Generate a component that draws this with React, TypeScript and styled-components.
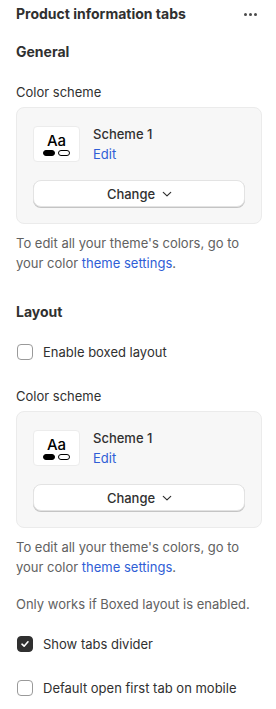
import styled, { createGlobalStyle } from "styled-components";

const GlobalStyle = createGlobalStyle`
  body {
    margin: 0;
    background: #ffffff;
    font-family: Inter, "Noto Sans", sans-serif;
    color: #303030;
    -webkit-font-smoothing: antialiased;
  }
`;

const Panel = styled.div`
  width: 276px;
  box-sizing: border-box;
  padding: 4px 14px 0 16px;
  display: flex;
  flex-direction: column;
`;

const Header = styled.div`
  display: flex;
  align-items: center;
  justify-content: space-between;
  height: 20px;
`;

const Title = styled.h1`
  margin: 0;
  font-size: 14px;
  font-weight: 650;
  line-height: 20px;
  color: #303030;
`;

const MenuButton = styled.div`
  display: flex;
  gap: 2px;
  padding-right: 5px;
  span {
    width: 3px;
    height: 3px;
    border-radius: 50%;
    background: #4a4a4a;
  }
`;

const SectionTitle = styled.h2<{ $top: number }>`
  margin: ${(p) => p.$top}px 0 0;
  font-size: 14px;
  font-weight: 650;
  line-height: 20px;
`;

const Label = styled.div<{ $top: number }>`
  margin-top: ${(p) => p.$top}px;
  font-size: 13px;
  line-height: 20px;
`;

const Card = styled.div`
  margin-top: 5px;
  background: #f7f7f7;
  border: 1px solid #ebebeb;
  border-radius: 8px;
  padding: 18px 16px 16px 16px;
  display: flex;
  flex-direction: column;
  gap: 18px;
`;

const SchemeRow = styled.div`
  display: flex;
  align-items: flex-start;
  gap: 13px;
  height: 36px;
`;

const Swatch = styled.div`
  width: 47px;
  height: 36px;
  box-sizing: border-box;
  background: #ffffff;
  border: 1px solid #ececec;
  border-radius: 4px;
  display: flex;
  flex-direction: column;
  align-items: center;
  justify-content: center;
  gap: 1px;
`;

const SwatchText = styled.div`
  font-size: 15px;
  font-weight: 450;
  line-height: 16px;
  color: #000;
`;

const Pills = styled.div`
  display: flex;
  gap: 3px;
`;

const Pill = styled.div<{ $filled?: boolean }>`
  width: 12px;
  height: 6px;
  box-sizing: border-box;
  border-radius: 3px;
  border: 1px solid #000;
  background: ${(p) => (p.$filled ? "#000" : "#fff")};
`;

const SchemeInfo = styled.div`
  display: flex;
  flex-direction: column;
  margin-top: -2px;
  font-size: 13px;
  line-height: 20px;
`;

const SchemeName = styled.div`
  font-weight: 550;
`;

const Link = styled.span`
  color: #2f5ed6;
`;

const ChangeButton = styled.button`
  height: 27px;
  width: 100%;
  background: #ffffff;
  border: 1px solid #e3e3e3;
  border-radius: 8px;
  box-shadow: 0 1px 0 #c4c4c4;
  display: flex;
  align-items: center;
  justify-content: center;
  gap: 6px;
  font-family: inherit;
  font-size: 13px;
  font-weight: 450;
  color: #303030;
  padding: 0 0 0 2px;
`;

const Help = styled.p<{ $top: number }>`
  margin: ${(p) => p.$top}px 0 0;
  font-size: 13px;
  line-height: 20px;
  color: #616161;
`;

const CheckRow = styled.label<{ $top: number }>`
  margin-top: ${(p) => p.$top}px;
  display: flex;
  align-items: center;
  gap: 10px;
  font-size: 13px;
  line-height: 20px;
  color: #303030;
`;

const Box = styled.span<{ $checked?: boolean }>`
  width: 16px;
  height: 16px;
  box-sizing: border-box;
  margin-left: 1px;
  border-radius: 4px;
  border: 1px solid ${(p) => (p.$checked ? "#303030" : "#9a9a9a")};
  background: ${(p) => (p.$checked ? "#303030" : "#fff")};
  display: flex;
  align-items: center;
  justify-content: center;
`;

const Chevron = () => (
  <svg width="12" height="12" viewBox="0 0 12 12" fill="none">
    <path d="M2.3 4.4 6 7.9 9.7 4.4" stroke="#303030" strokeWidth="1.2" strokeLinecap="round" strokeLinejoin="round" />
  </svg>
);

const Check = () => (
  <svg width="10" height="10" viewBox="0 0 10 10" fill="none">
    <path d="M2 5.2 4.1 7.2 8 2.8" stroke="#fff" strokeWidth="1.6" strokeLinecap="round" strokeLinejoin="round" />
  </svg>
);

const SchemeCard = () => (
  <Card>
    <SchemeRow>
      <Swatch>
        <SwatchText>Aa</SwatchText>
        <Pills>
          <Pill $filled />
          <Pill />
        </Pills>
      </Swatch>
      <SchemeInfo>
        <SchemeName>Scheme 1</SchemeName>
        <Link>Edit</Link>
      </SchemeInfo>
    </SchemeRow>
    <ChangeButton>
      Change <Chevron />
    </ChangeButton>
  </Card>
);

const ThemeHelp = () => (
  <Help $top={9}>
    To edit all your theme's colors, go to your color <Link>theme settings</Link>.
  </Help>
);

export default function App() {
  return (
    <>
      <GlobalStyle />
      <Panel>
        <Header>
          <Title>Product information tabs</Title>
          <MenuButton>
            <span />
            <span />
            <span />
          </MenuButton>
        </Header>
        <SectionTitle $top={18}>General</SectionTitle>
        <Label $top={20}>Color scheme</Label>
        <SchemeCard />
        <ThemeHelp />
        <SectionTitle $top={29}>Layout</SectionTitle>
        <CheckRow $top={20}>
          <Box />
          Enable boxed layout
        </CheckRow>
        <Label $top={24}>Color scheme</Label>
        <SchemeCard />
        <ThemeHelp />
        <Help $top={17}>Only works if Boxed layout is enabled.</Help>
        <CheckRow $top={20}>
          <Box $checked>
            <Check />
          </Box>
          Show tabs divider
        </CheckRow>
        <CheckRow $top={24}>
          <Box />
          Default open first tab on mobile
        </CheckRow>
      </Panel>
    </>
  );
}
